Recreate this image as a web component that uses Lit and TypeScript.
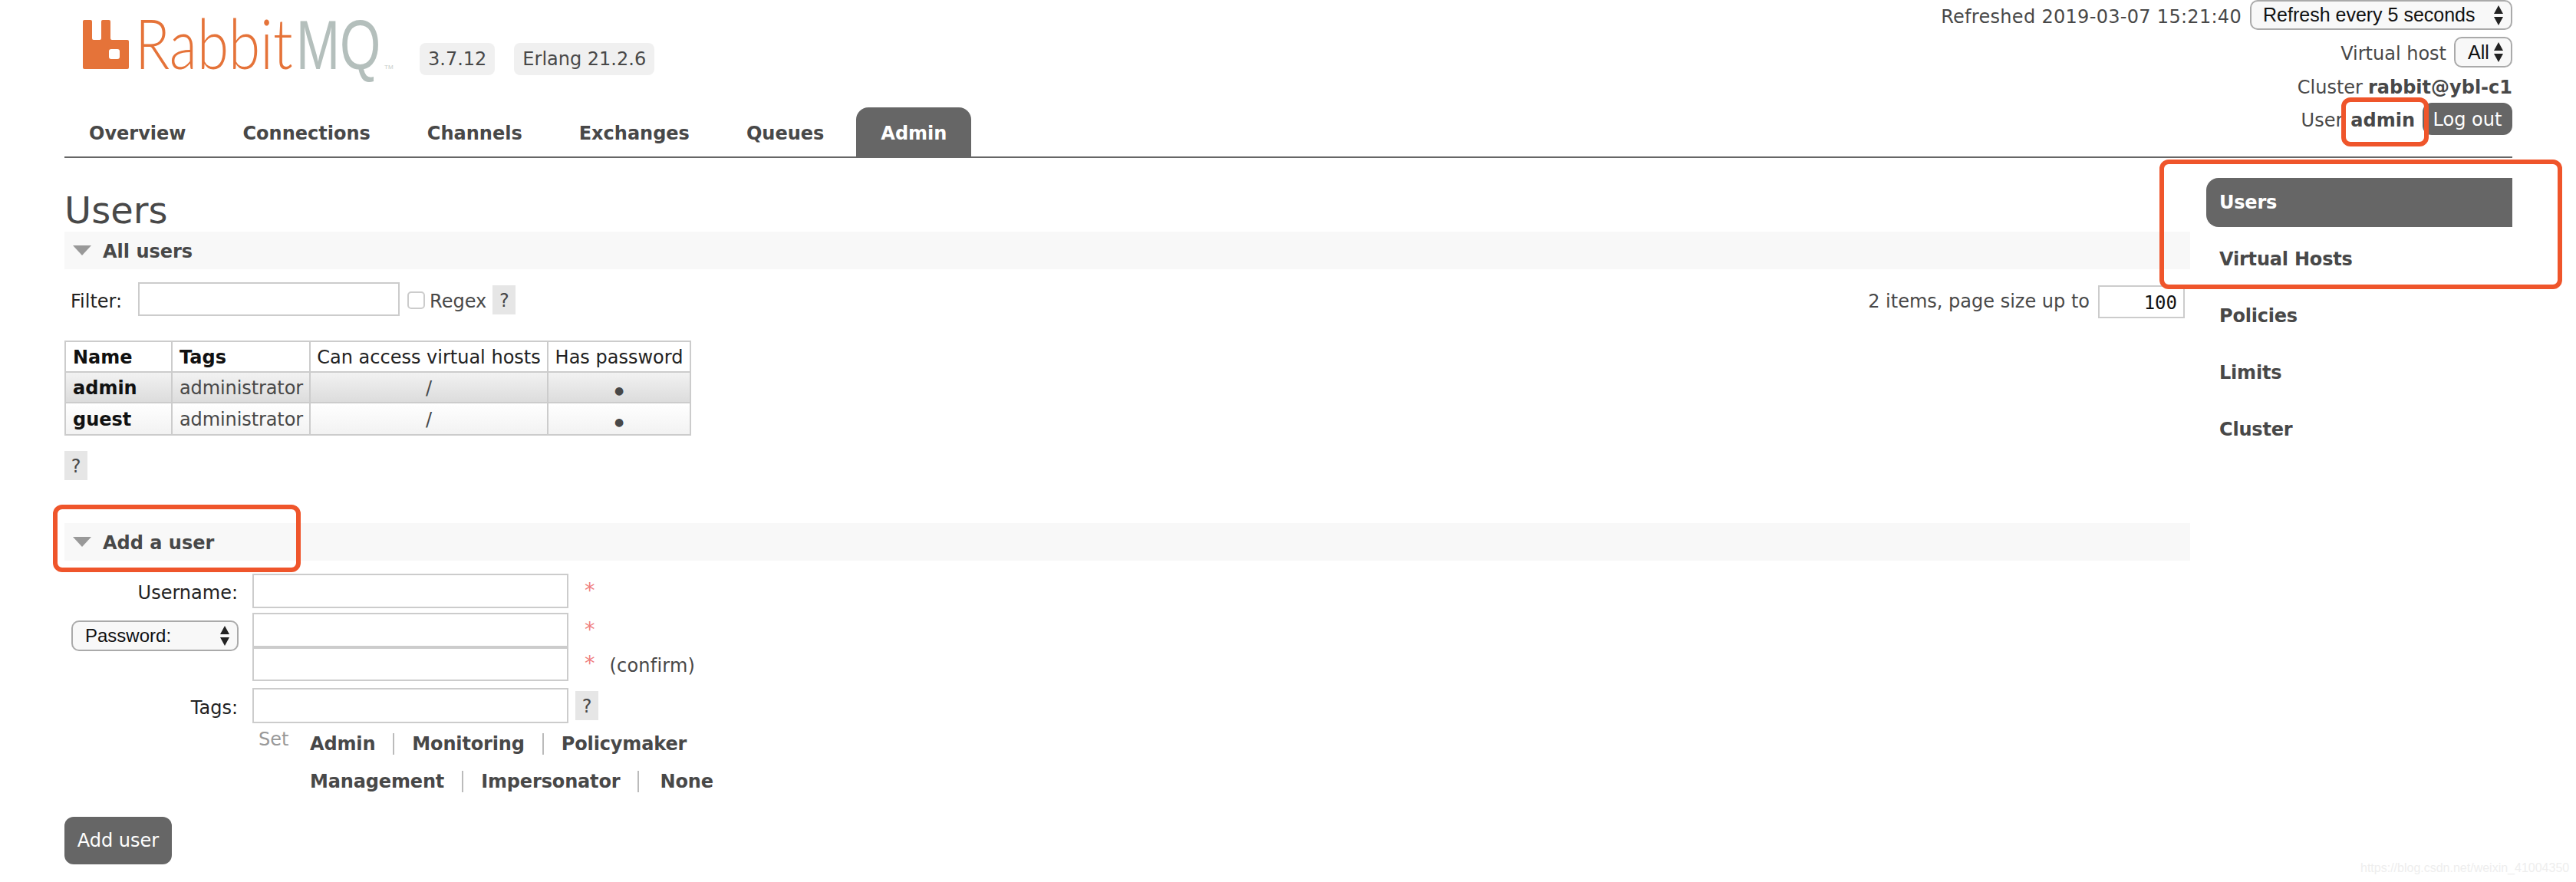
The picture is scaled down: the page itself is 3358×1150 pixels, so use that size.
import { LitElement, html, css, svg } from "lit";
import { customElement } from "lit/decorators.js";

const arrows = svg`<svg class="arrows" width="14" height="28" viewBox="0 0 14 28"><path d="M7 1 L13 12 H1 Z M7 27 L13 16 H1 Z" fill="#222"/></svg>`;
const tri = svg`<svg class="tri" width="24" height="13" viewBox="0 0 24 13"><path d="M0 0 H24 L12 13 Z" fill="#999"/></svg>`;

@customElement("app-root")
export class AppRoot extends LitElement {
  static styles = css`
    :host { display: block; position: relative; width: 3358px; height: 1150px; overflow: hidden; background: #fff;
      font-family: "DejaVu Sans", Verdana, sans-serif; font-size: 24px; color: #484848; }
    .page { padding: 0 83px 0 84px; }
    header { display: flex; justify-content: space-between; height: 204px; border-bottom: 2px solid #666; }
    .left { display: flex; flex-direction: column; justify-content: space-between; }
    .brand { display: flex; align-items: flex-start; padding: 26px 0 0 24px; }
    .logo { display: block; overflow: visible; }
    .badge { margin-top: 30px; height: 42px; line-height: 43px; padding: 0 11px; background: #f0f0f0; border-radius: 8px; }
    .b1 { margin-left: 32px; }
    .b2 { margin-left: 25px; }
    nav { display: flex; gap: 10px; }
    nav a { height: 64px; line-height: 68px; padding: 0 32px; font-weight: 700; border-radius: 16px 16px 0 0; }
    nav a.on { background: #666; color: #fff; }
    .status { display: flex; flex-direction: column; align-items: flex-end; }
    .line { display: flex; align-items: center; justify-content: flex-end; white-space: nowrap; }
    .line > .tx, .line > b { padding-top: 4px; }
    .stamp { letter-spacing: 0.3px; }
    .l1 { height: 39px; gap: 11px; }
    .l2 { height: 40px; gap: 10px; margin-top: 9px; }
    .l3 { height: 40px; margin-top: 4px; gap: 7px; }
    .l4 { height: 42px; margin-top: 2px; gap: 10px; }
    .select { box-sizing: border-box; display: flex; align-items: center; justify-content: space-between; border: 2px solid #aaa; border-radius: 10px; background: #f8f8f8;
      font-family: "Liberation Sans", Arial, sans-serif; color: #111; }
    .s1 { width: 342px; height: 39px; padding: 0 9px 0 15px; font-size: 25px; }
    .s2 { width: 76px; height: 40px; padding: 0 9px 0 16px; font-size: 25px; }
    .s3 { width: 218px; height: 40px; padding: 0 9px 0 16px; font-size: 24px; }
    .logout { height: 42px; line-height: 44px; width: 117px; text-align: center; background: #666; color: #fff; border-radius: 12px; }
    b { font-weight: 700; }
    main { display: flex; gap: 21px; }
    .content { width: 2771px; }
    .side { width: 399px; padding-top: 26px; }
    .side a { display: block; height: 64px; line-height: 64px; margin-bottom: 10px; padding-left: 17px; font-weight: 700; letter-spacing: -0.2px; border-radius: 16px 0 0 16px; }
    .side a.on { background: #666; color: #fff; }
    h1 { margin: 40px 0 0; height: 56px; line-height: 56px; font-size: 48px; font-weight: 400; }
    h2 { margin: 0; display: flex; align-items: center; gap: 15px; height: 49px; padding-left: 11px; background: #f8f8f8; font-size: 24px; font-weight: 700; }
    h2 span { padding-top: 3px; }
    h2.add { margin-top: 56px; }
    .filter { display: flex; justify-content: space-between; margin-top: 17px; height: 47px; }
    .fl { display: flex; align-items: flex-start; padding-left: 8px; }
    .fl > span { line-height: 50px; color: #222; }
    .fl > .ilabel { color: #484848; }
    .input { box-sizing: border-box; border: 2px solid #ccc; background: #fff; }
    .fi { width: 341px; height: 44px; margin-left: 21px; }
    .check { box-sizing: border-box; width: 23px; height: 23px; margin: 12px 6px 0 10px; border: 2px solid #ccc; border-radius: 5px; }
    .help { width: 30px; height: 38px; line-height: 40px; text-align: center; background: #e6e6e6; }
    .fl .help { margin: 4px 0 0 8px; }
    .fr { display: flex; align-items: flex-start; padding-right: 7px; }
    .fr > span { line-height: 50px; }
    .size { box-sizing: border-box; width: 113px; height: 43px; margin: 4px 0 0 11px; padding-right: 8px; text-align: right; line-height: 42px; font-family: "DejaVu Sans Mono", monospace; color: #111; }
    table { margin-top: 29px; width: 815px; table-layout: fixed; border-collapse: collapse; }
    th, td { box-sizing: border-box; border: 2px solid #ccc; height: 40px; padding: 2px 0 0; white-space: nowrap; }
    tr.r2 td { height: 42px; }
    th { font-weight: 400; color: #222; background: #fff; text-align: center; }
    th.n, td.n { text-align: left; padding-left: 9px; }
    th.n { font-weight: 700; color: #111; }
    td { text-align: center; }
    td.k { font-weight: 700; color: #111; }
    td.t { letter-spacing: -0.1px; }
    tr.r1 td { background: linear-gradient(#f2f2f2, #dcdcdc); }
    tr.r2 td { background: linear-gradient(#fff, #f2f2f2); }
    .dot { font-size: 14px; }
    .help.solo { margin-top: 20px; }
    .form { display: grid; grid-template-columns: 227px 412px 1fr; column-gap: 18px; margin-top: 17px; align-items: center; }
    .form .input { width: 412px; grid-column: 2; }
    .lab { justify-self: end; grid-column: 1; padding: 5px 1px 0 0; color: #222; }
    .mk4l { margin-top: 9px; }
    .i1 { height: 45px; }
    .i2 { height: 45px; margin-top: 6px; }
    .i3 { height: 44px; }
    .i4 { height: 46px; margin-top: 9px; }
    .s3 { grid-column: 1; grid-row: 2 / span 2; align-self: start; justify-self: end; margin: 16px 0 0 0; }
    .mark { grid-column: 3; display: flex; align-items: center; gap: 19px; margin-left: 3px; }
    .star { color: #ef8080; font-size: 27px; margin-bottom: 3px; }
    .conf { padding-top: 3px; letter-spacing: 0.2px; }
    .mk2 { margin-top: 6px; }
    .mk4 { margin-top: 9px; margin-left: -9px; }
    .tags { display: flex; margin-top: 2px; padding-left: 253px; }
    .set { width: 67px; color: #999; line-height: 38px; }
    .links { display: flex; flex-direction: column; }
    .ln { display: flex; height: 49px; align-items: center; font-weight: 700; letter-spacing: -0.15px; }
    .sep { width: 2px; height: 28px; background: #bbb; margin: 0 23px; }
    .sep.wide { margin-right: 27px; }
    .go { margin-top: 22px; width: 140px; height: 62px; line-height: 62px; text-align: center; color: #fff; background: #666; border-radius: 12px; }
    .box { position: absolute; box-sizing: border-box; border: 6px solid #ef552b; border-radius: 12px; }
    .bx1 { left: 3052px; top: 127px; width: 114px; height: 64px; }
    .bx2 { left: 2815px; top: 208px; width: 525px; height: 169px; }
    .bx3 { left: 69px; top: 658px; width: 323px; height: 88px; }
    .mark-url { position: absolute; left: 3077px; top: 1123px; font: 16px "Liberation Sans", Arial, sans-serif; color: #eee; white-space: nowrap; }
  `;

  render() {
    return html`
      <div class="page">
        <header>
          <div class="left">
            <div class="brand">
              <svg class="logo" width="407" height="64" viewBox="0 0 407 64">
                <path fill-rule="evenodd" fill="#e57339" d="M0 2Q0 0 2 0H10Q12 0 12 2V24Q12 26 14 26H22Q24 26 24 24V2Q24 0 26 0H34Q36 0 36 2V24Q36 26 38 26H58Q60 26 60 28V62Q60 64 58 64H2Q0 64 0 62ZM37 38Q34 38 34 41V48Q34 51 37 51H45Q48 51 48 48V41Q48 38 45 38Z"/>
                <text transform="translate(68 64) scale(.83 1)" font-family="Lato, Open Sans, sans-serif" font-weight="300" font-size="90" fill="#e57339">Rabbit</text>
                <text transform="translate(278 64) scale(.76 1)" font-family="Liberation Sans, sans-serif" font-size="90" fill="#b4bfbc">MQ</text>
                <text x="393" y="64" font-family="Liberation Sans, sans-serif" font-size="8" fill="#c5cdcb">TM</text>
              </svg>
              <span class="badge b1">3.7.12</span>
              <span class="badge b2">Erlang 21.2.6</span>
            </div>
            <nav>
              <a>Overview</a><a>Connections</a><a>Channels</a><a>Exchanges</a><a>Queues</a><a class="on">Admin</a>
            </nav>
          </div>
          <div class="status">
            <div class="line l1"><span class="tx stamp">Refreshed 2019-03-07 15:21:40</span><div class="select s1"><span>Refresh every 5 seconds</span>${arrows}</div></div>
            <div class="line l2"><span class="tx">Virtual host</span><div class="select s2"><span>All</span>${arrows}</div></div>
            <div class="line l3"><span class="tx">Cluster</span><b>rabbit@ybl-c1</b></div>
            <div class="line l4"><span class="tx">User</span><b>admin</b><span class="logout">Log out</span></div>
          </div>
        </header>
        <main>
          <div class="content">
            <h1>Users</h1>
            <h2>${tri}<span>All users</span></h2>
            <div class="filter">
              <div class="fl">
                <span>Filter:</span>
                <div class="input fi"></div>
                <div class="check"></div>
                <span class="ilabel">Regex</span>
                <div class="help">?</div>
              </div>
              <div class="fr">
                <span>2 items, page size up to</span>
                <div class="input size">100</div>
              </div>
            </div>
            <table>
              <colgroup><col style="width:139px" /><col style="width:180px" /><col style="width:310px" /><col style="width:186px" /></colgroup>
              <tr><th class="n">Name</th><th class="n">Tags</th><th>Can access virtual hosts</th><th>Has password</th></tr>
              <tr class="r1"><td class="n k">admin</td><td class="n t">administrator</td><td>/</td><td><span class="dot">●</span></td></tr>
              <tr class="r2"><td class="n k">guest</td><td class="n t">administrator</td><td>/</td><td><span class="dot">●</span></td></tr>
            </table>
            <div class="help solo">?</div>
            <h2 class="add">${tri}<span>Add a user</span></h2>
            <div class="form">
              <span class="lab">Username:</span>
              <div class="input i1"></div>
              <div class="mark"><span class="star">*</span></div>
              <div class="select s3"><span>Password:</span>${arrows}</div>
              <div class="input i2"></div>
              <div class="mark mk2"><span class="star">*</span></div>
              <div class="input i3"></div>
              <div class="mark"><span class="star">*</span><span class="conf">(confirm)</span></div>
              <span class="lab mk4l">Tags:</span>
              <div class="input i4"></div>
              <div class="mark mk4"><div class="help">?</div></div>
            </div>
            <div class="tags">
              <span class="set">Set</span>
              <div class="links">
                <div class="ln"><span>Admin</span><i class="sep"></i><span>Monitoring</span><i class="sep"></i><span>Policymaker</span></div>
                <div class="ln"><span>Management</span><i class="sep"></i><span>Impersonator</span><i class="sep wide"></i><span>None</span></div>
              </div>
            </div>
            <div class="go">Add user</div>
          </div>
          <aside class="side">
            <a class="on">Users</a><a>Virtual Hosts</a><a>Policies</a><a>Limits</a><a>Cluster</a>
          </aside>
        </main>
      </div>
      <div class="box bx1"></div>
      <div class="box bx2"></div>
      <div class="box bx3"></div>
      <div class="mark-url">https://blog.csdn.net/weixin_41004350</div>
    `;
  }
}
